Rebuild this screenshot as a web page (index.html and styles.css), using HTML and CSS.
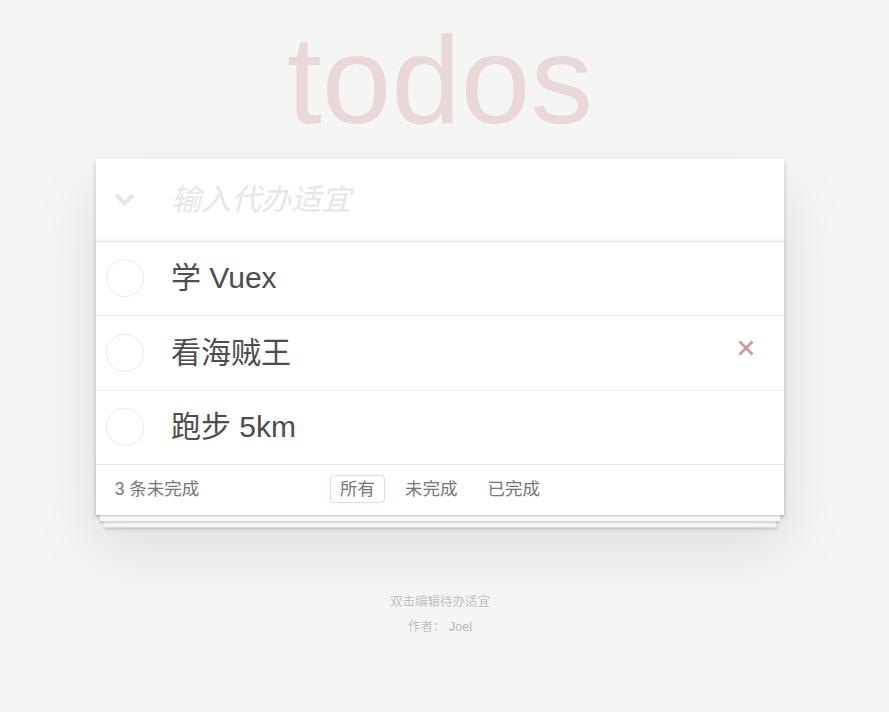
FILE: index.html
```html
<!DOCTYPE html>
<html lang="zh-CN">
<head>
<meta charset="utf-8">
<title>todos</title>
<link rel="stylesheet" href="styles.css">
</head>
<body>
<div class="page">
  <h1 class="title">todos</h1>
  <section class="todoapp">
    <header class="new-row">
      <span class="toggle-all">
        <svg width="21" height="13" viewBox="0 0 21 13"><polyline points="2,2 10.5,10.5 19,2" fill="none" stroke="#e6e6e6" stroke-width="4"/></svg>
      </span>
      <input class="new-todo" placeholder="输入代办适宜">
    </header>
    <ul class="todo-list">
      <li class="todo"><span class="toggle"></span><label class="todo-text">学 Vuex</label></li>
      <li class="todo"><span class="toggle"></span><label class="todo-text">看海贼王</label>
        <button class="destroy" aria-label="删除"><svg width="16" height="16" viewBox="0 0 16 16"><path d="M1.5 1.5 L14.5 14.5 M14.5 1.5 L1.5 14.5" stroke="#cc9a9a" stroke-width="2.8" fill="none"/></svg></button>
      </li>
      <li class="todo"><span class="toggle"></span><label class="todo-text">跑步 5km</label></li>
    </ul>
    <footer class="footer">
      <span class="todo-count">3 条未完成</span>
      <ul class="filters">
        <li><a class="filter selected">所有</a></li>
        <li><a class="filter">未完成</a></li>
        <li><a class="filter">已完成</a></li>
      </ul>
      <span class="spacer"></span>
    </footer>
  </section>
  <footer class="info">
    <p>双击编辑待办适宜</p>
    <p>作者： <a class="author">Joel</a></p>
  </footer>
</div>
</body>
</html>
```

FILE: styles.css
```css
html, body {
  margin: 0;
  padding: 0;
}

body {
  background: #f5f5f5;
  color: #4d4d4d;
  font-family: "Liberation Sans", "Noto Sans CJK SC", sans-serif;
  font-size: 17.5px;
  line-height: 1.4;
}

.page {
  width: 688px;
  margin-left: 96px;
  padding-top: 1px;
}

.title {
  margin: 16px 0 17px;
  height: 125px;
  font-size: 125px;
  line-height: 125px;
  font-weight: 400;
  text-align: center;
  color: rgba(175, 47, 47, 0.15);
}

.todoapp {
  background: #fff;
  box-shadow: 0 2.5px 5px 0 rgba(0, 0, 0, 0.2), 0 31px 62px 0 rgba(0, 0, 0, 0.1);
  margin-bottom: 50px;
}

.new-row {
  display: flex;
  align-items: center;
  height: 81.5px;
  box-shadow: inset 0 -2.5px 1.25px rgba(0, 0, 0, 0.03);
}

.toggle-all {
  width: 57px;
  flex: none;
  display: flex;
  justify-content: center;
  align-items: center;
}

.new-todo {
  flex: 1;
  min-width: 0;
  height: 81.5px;
  box-sizing: border-box;
  border: 0;
  outline: none;
  background: transparent;
  padding: 0 20px 0 18px;
  font-family: "Liberation Sans", "Noto Sans CJK SC", sans-serif;
  font-size: 30px;
  color: #4d4d4d;
}

.new-todo::placeholder {
  font-style: italic;
  color: #e6e6e6;
}

.todo-list {
  list-style: none;
  margin: 0;
  padding: 0;
  border-top: 1px solid #e6e6e6;
}

.todo {
  display: flex;
  align-items: center;
  height: 73.5px;
  border-bottom: 1px solid #ededed;
  font-size: 30px;
  color: #4d4d4d;
}

.todo:last-child {
  border-bottom: none;
}

.toggle {
  flex: none;
  width: 38px;
  height: 38px;
  box-sizing: border-box;
  border: 1px solid #ebebeb;
  border-radius: 50%;
  margin-left: 10px;
}

.todo-text {
  flex: 1;
  margin-left: 27px;
  line-height: 36px;
  height: 36px;
  white-space: nowrap;
}

.destroy {
  flex: none;
  width: 50px;
  height: 50px;
  box-sizing: border-box;
  margin-right: 13px;
  padding: 0 0 9px;
  border: 0;
  background: none;
  display: flex;
  align-items: center;
  justify-content: center;
}

.footer {
  position: relative;
  display: grid;
  grid-template-columns: 1fr auto 1fr;
  align-items: center;
  height: 51px;
  box-sizing: border-box;
  padding: 0 18.75px 2px;
  border-top: 1px solid #e6e6e6;
  color: #777;
  font-size: 17.5px;
}

.footer::before {
  content: "";
  position: absolute;
  left: 0;
  right: 0;
  bottom: 0;
  height: 62.5px;
  overflow: hidden;
  pointer-events: none;
  box-shadow: 0 1.25px 1.25px rgba(0, 0, 0, 0.2),
    0 10px 0 -3.75px #f6f6f6,
    0 11.25px 1.25px -3.75px rgba(0, 0, 0, 0.2),
    0 20px 0 -7.5px #f6f6f6,
    0 21.25px 2.5px -7.5px rgba(0, 0, 0, 0.2);
}

.todo-count {
  text-align: left;
  white-space: nowrap;
  line-height: 24px;
}

.filters {
  display: flex;
  gap: 3px;
  list-style: none;
  margin: 0;
  padding: 0;
}

.filter {
  display: block;
  margin: 0 3.75px;
  padding: 3.75px 8.75px;
  border: 1.25px solid transparent;
  border-radius: 3.75px;
  line-height: 18px;
  color: inherit;
  text-decoration: none;
}

.filter.selected {
  border-color: rgba(175, 47, 47, 0.2);
}

.info {
  margin-top: 81px;
  color: #bfbfbf;
  font-size: 12.5px;
  text-align: center;
  text-shadow: 0 1px 0 rgba(255, 255, 255, 0.5);
}

.info p {
  margin: 12.5px 0;
  line-height: 1;
}

.author {
  color: #b5b5b5;
}
```
